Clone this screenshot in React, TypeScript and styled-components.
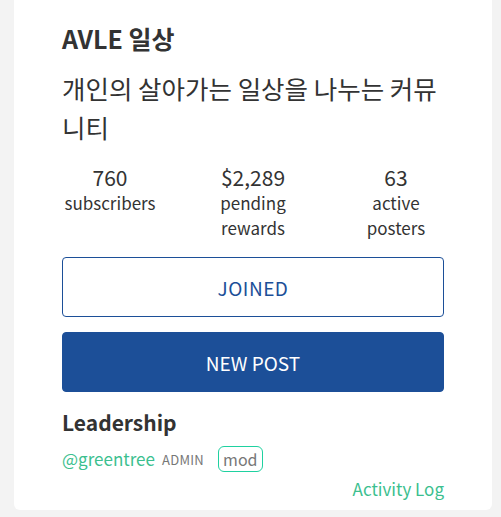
import React from "react";
import styled, { createGlobalStyle } from "styled-components";

const Global = createGlobalStyle`
  html, body { margin: 0; padding: 0; background: #f3f3f3; }
  body { font-family: "Noto Sans CJK KR", "Source Sans Pro", "Noto Sans", sans-serif; color: #333; }
`;

const Page = styled.div`
  width: 501px;
  height: 517px;
  padding: 0 9px 0 14px;
  box-sizing: border-box;
  overflow: hidden;
`;

const Card = styled.div`
  background: #fff;
  border-radius: 0 0 6px 6px;
  padding: 24px 48px 8px 48px;
  margin-top: -4px;
  display: flex;
  flex-direction: column;
`;

const Title = styled.h2`
  margin: 0;
  font-size: 25px;
  font-weight: 700;
  line-height: 36px;
  color: #333;
`;

const Description = styled.p`
  margin: 12px 0 0;
  font-size: 25.5px;
  line-height: 39px;
  font-weight: 400;
  color: #333;
`;

const Stats = styled.div`
  display: grid;
  grid-template-columns: repeat(3, 143px);
  justify-content: center;
  margin: 19px -24px 0;
`;

const Stat = styled.div`
  display: flex;
  flex-direction: column;
  align-items: center;
  text-align: center;
`;

const StatValue = styled.div`
  font-size: 21px;
  line-height: 25px;
  color: #333;
`;

const StatLabel = styled.div`
  font-size: 17px;
  line-height: 25px;
  color: #333;
`;

const Button = styled.button<{ $primary?: boolean }>`
  display: flex;
  align-items: center;
  justify-content: center;
  width: 100%;
  height: 60px;
  border-radius: 4px;
  border: 1px solid #1c4f98;
  background: ${(p) => (p.$primary ? "#1c4f98" : "#fff")};
  color: ${(p) => (p.$primary ? "#fff" : "#1c4f98")};
  font-family: inherit;
  font-size: 19px;
  letter-spacing: ${(p) => (p.$primary ? "0" : "0.5px")};
  font-weight: 400;
  padding: 0;
  margin-top: ${(p) => (p.$primary ? "15px" : "17px")};
  cursor: pointer;
`;

const SectionTitle = styled.h3`
  margin: 15px 0 0;
  font-size: 21px;
  font-weight: 700;
  line-height: 30px;
  color: #333;
`;

const LeaderRow = styled.div`
  display: flex;
  align-items: center;
  height: 26px;
  margin-top: 9px;
`;

const Handle = styled.span`
  color: #3cbf8f;
  font-size: 17px;
  line-height: 26px;
`;

const Role = styled.span`
  color: #777;
  font-size: 13px;
  margin-left: 7px;
  letter-spacing: 0.3px;
`;

const Badge = styled.span`
  color: #777;
  font-size: 16px;
  line-height: 24px;
  border: 1px solid #1fd1a0;
  border-radius: 6px;
  padding: 0 4px;
  margin-left: 14px;
`;

const FooterLink = styled.a`
  align-self: flex-end;
  color: #3cbf8f;
  font-size: 17px;
  line-height: 26px;
  margin-top: 4px;
  text-decoration: none;
`;

export default function App() {
  return (
    <>
      <Global />
      <Page>
        <Card>
          <Title>AVLE 일상</Title>
          <Description>개인의 살아가는 일상을 나누는 커뮤니티</Description>
          <Stats>
            <Stat>
              <StatValue>760</StatValue>
              <StatLabel>subscribers</StatLabel>
            </Stat>
            <Stat>
              <StatValue>$2,289</StatValue>
              <StatLabel>pending<br />rewards</StatLabel>
            </Stat>
            <Stat>
              <StatValue>63</StatValue>
              <StatLabel>active<br />posters</StatLabel>
            </Stat>
          </Stats>
          <Button>JOINED</Button>
          <Button $primary>NEW POST</Button>
          <SectionTitle>Leadership</SectionTitle>
          <LeaderRow>
            <Handle>@greentree</Handle>
            <Role>ADMIN</Role>
            <Badge>mod</Badge>
          </LeaderRow>
          <FooterLink href="#">Activity Log</FooterLink>
        </Card>
      </Page>
    </>
  );
}
